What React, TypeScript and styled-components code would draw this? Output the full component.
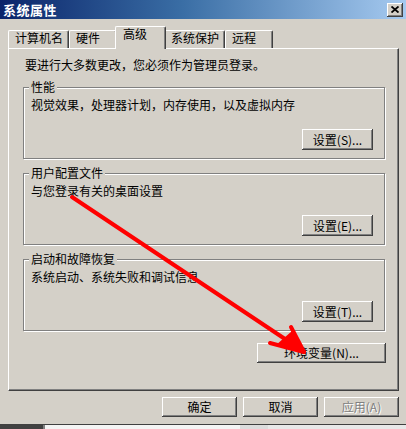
import React from 'react';
import styled, { createGlobalStyle } from 'styled-components';

const face = '#D4D0C8';

const GlobalStyle = createGlobalStyle`
  html, body {
    margin: 0;
    padding: 0;
    background: ${face};
  }
  body {
    font-family: "Noto Sans CJK SC", "Noto Sans", sans-serif;
    font-size: 12px;
    color: #000;
  }
`;

const Window = styled.div`
  position: relative;
  width: 406px;
  height: 429px;
  display: flex;
  flex-direction: column;
  overflow: hidden;
  background: ${face};
`;

const TitleBar = styled.div`
  height: 19px;
  display: flex;
  align-items: center;
  justify-content: space-between;
  padding: 0 3px;
  background: linear-gradient(to right, #0a246a 0%, #3a6ea5 45%, #a6caf0 100%);
`;

const Title = styled.span`
  color: #fff;
  font-size: 13px;
  font-weight: bold;
  line-height: 19px;
  letter-spacing: 0.5px;
`;

const CloseButton = styled.div`
  width: 16px;
  height: 14px;
  display: flex;
  align-items: center;
  justify-content: center;
  background: ${face};
  box-shadow: inset -1px -1px #404040, inset 1px 1px #fff, inset -2px -2px #808080;
`;

const Content = styled.div`
  display: flex;
  flex-direction: column;
  padding: 0 7px 0 8px;
`;

const TabRow = styled.div`
  height: 29px;
  display: flex;
  align-items: flex-end;
`;

const Tab = styled.div<{ $w: number; $active?: boolean }>`
  position: relative;
  z-index: ${({ $active }) => ($active ? 2 : 1)};
  box-sizing: border-box;
  width: ${({ $w }) => $w}px;
  height: ${({ $active }) => ($active ? 23 : 18)}px;
  margin: ${({ $active }) => ($active ? '0 -2px -1px' : '0')};
  padding-left: ${({ $active }) => ($active ? 7 : 6)}px;
  line-height: 14px;
  background: ${face};
  border-top: 1px solid #fff;
  border-left: 1px solid #fff;
  border-right: 1px solid #404040;
  border-radius: 2px 2px 0 0;
  box-shadow: inset -1px 0 #808080;
  white-space: nowrap;
`;

const Panel = styled.div`
  box-sizing: border-box;
  height: 343px;
  display: flex;
  flex-direction: column;
  padding: 9px 13px 0 14px;
  border-top: 1px solid #fff;
  border-left: 1px solid #fff;
  border-right: 1px solid #404040;
  border-bottom: 1px solid #404040;
  box-shadow: inset -1px -1px #808080;
`;

const Notice = styled.div`
  margin-left: 2px;
  line-height: 14px;
`;

const GroupBox = styled.div<{ $gap: number }>`
  position: relative;
  box-sizing: border-box;
  height: 72px;
  margin-top: ${({ $gap }) => $gap}px;
  display: flex;
  flex-direction: column;
  padding: 10px 11px 0 7px;
  border: 1px solid #808080;
  box-shadow: inset 1px 1px #fff, 1px 1px #fff;
`;

const Legend = styled.span`
  position: absolute;
  top: -8px;
  left: 5px;
  padding: 0 2px;
  line-height: 14px;
  background: ${face};
`;

const Description = styled.div`
  line-height: 14px;
`;

const Button = styled.div<{ $w: number; $disabled?: boolean }>`
  box-sizing: border-box;
  width: ${({ $w }) => $w}px;
  height: 21px;
  display: flex;
  align-items: center;
  justify-content: center;
  line-height: 14px;
  white-space: nowrap;
  background: ${face};
  color: ${({ $disabled }) => ($disabled ? '#808080' : '#000')};
  text-shadow: ${({ $disabled }) => ($disabled ? '1px 1px 0 #fff' : 'none')};
  box-shadow: inset -1px -1px #404040, inset 1px 1px #fff, inset -2px -2px #808080;
`;

const SettingsButton = styled(Button)`
  align-self: flex-end;
  margin-top: 17px;
`;

const EnvButton = styled(Button)`
  align-self: flex-end;
  height: 20px;
  margin-top: 12px;
  margin-right: -1px;
`;

const ButtonRow = styled.div`
  display: flex;
  justify-content: flex-end;
  gap: 6px;
  margin-top: 6px;

  ${Button} {
    height: 20px;
  }
`;

const Taskbar = styled.div`
  margin-top: auto;
  height: 4px;
  display: flex;
  border-top: 1px solid #404040;
`;

const TaskSeg = styled.div<{ $w?: number; $bg: string }>`
  width: ${({ $w }) => ($w ? `${$w}px` : 'auto')};
  flex: ${({ $w }) => ($w ? 'none' : 1)};
  background: ${({ $bg }) => $bg};
`;

const ArrowLayer = styled.svg`
  position: absolute;
  left: 0;
  top: 0;
  pointer-events: none;
`;

const tabs = [
  { label: '计算机名', w: 61 },
  { label: '硬件', w: 48 },
  { label: '高级', w: 51, active: true },
  { label: '系统保护', w: 61 },
  { label: '远程', w: 48 },
];

const groups = [
  { title: '性能', text: '视觉效果，处理器计划，内存使用，以及虚拟内存', key: 'S', gap: 15 },
  { title: '用户配置文件', text: '与您登录有关的桌面设置', key: 'E', gap: 14 },
  { title: '启动和故障恢复', text: '系统启动、系统失败和调试信息', key: 'T', gap: 14 },
];

export default function App() {
  return (
    <>
      <GlobalStyle />
      <Window>
        <TitleBar>
          <Title>系统属性</Title>
          <CloseButton>
            <svg width="8" height="7" viewBox="0 0 8 7">
              <path d="M0.5 0.5 L7.5 6.5 M7.5 0.5 L0.5 6.5" stroke="#000" strokeWidth="1.8" />
            </svg>
          </CloseButton>
        </TitleBar>

        <Content>
          <TabRow>
            {tabs.map((t) => (
              <Tab key={t.label} $w={t.w} $active={t.active}>
                {t.label}
              </Tab>
            ))}
          </TabRow>

          <Panel>
            <Notice>要进行大多数更改，您必须作为管理员登录。</Notice>
            {groups.map((g) => (
              <GroupBox key={g.title} $gap={g.gap}>
                <Legend>{g.title}</Legend>
                <Description>{g.text}</Description>
                <SettingsButton $w={71}>设置({g.key})...</SettingsButton>
              </GroupBox>
            ))}
            <EnvButton $w={129}>环境变量(N)...</EnvButton>
          </Panel>

          <ButtonRow>
            <Button $w={75}>确定</Button>
            <Button $w={75}>取消</Button>
            <Button $w={75} $disabled>
              应用(A)
            </Button>
          </ButtonRow>
        </Content>

        <Taskbar>
          <TaskSeg $w={43} $bg="#404040" />
          <TaskSeg $w={2} $bg="#808080" />
          <TaskSeg $w={195} $bg="#f4f4f4" />
          <TaskSeg $w={28} $bg="#dcdcdc" />
          <TaskSeg $bg="#e8e8e8" />
        </Taskbar>

        <ArrowLayer width="406" height="429" viewBox="0 0 406 429">
          <g stroke="#ff0000" strokeWidth="4" strokeLinecap="round" fill="none">
            <line x1="72" y1="197" x2="300" y2="349" />
            <line x1="304" y1="352" x2="291" y2="327" />
            <line x1="304" y1="352" x2="270" y2="343" />
          </g>
          <polygon points="306,353 276,345 292,331" fill="#ff0000" />
        </ArrowLayer>
      </Window>
    </>
  );
}
